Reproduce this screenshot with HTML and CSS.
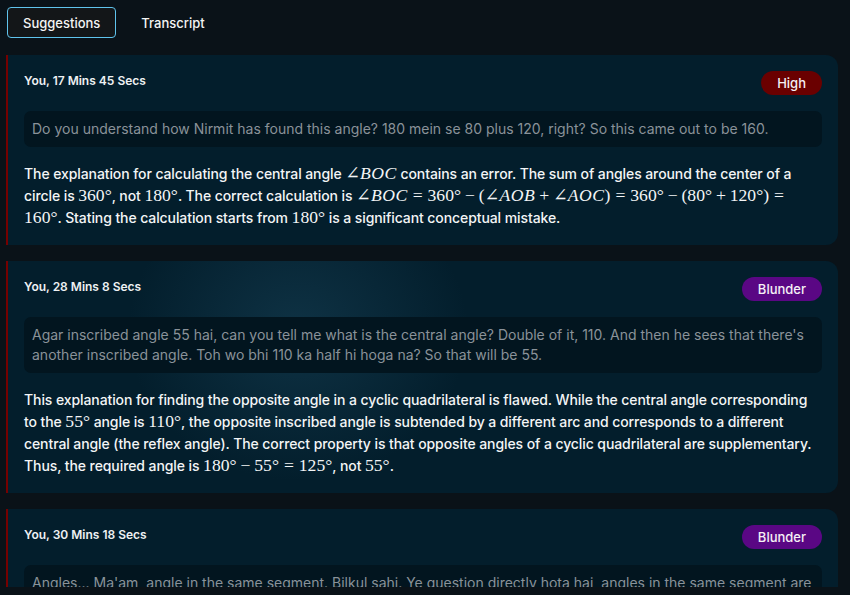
FILE: index.html
```html
<!DOCTYPE html>
<html>
<head>
<meta charset="utf-8">
<link rel="stylesheet" href="styles.css">
</head>
<body>
<div class="app">
  <div class="tabs">
    <button class="tab active">Suggestions</button>
    <button class="tab">Transcript</button>
  </div>
  <div class="list">
    <div class="card">
      <div class="card-head">
        <span class="who">You, 17 Mins 45 Secs</span>
        <span class="badge high">High</span>
      </div>
      <div class="quote">Do you understand how Nirmit has found this angle? 180 mein se 80 plus 120, right? So this came out to be 160.</div>
      <p class="expl">The explanation for calculating the central angle <span class="m">∠<i>BOC</i></span> contains an error. The sum of angles around the center of a circle is <span class="m">360°</span>, not <span class="m">180°</span>. The correct calculation is <span class="m">∠<i>BOC</i><span class="rel">=</span></span><span class="m">360°<span class="bin">−</span></span><span class="m">(∠<i>AOB</i><span class="bin">+</span></span><span class="m">∠<i>AOC</i>)<span class="rel">=</span></span><span class="m">360°<span class="bin">−</span></span><span class="m">(80°<span class="bin">+</span></span><span class="m">120°)<span class="rel">=</span></span> <span class="m">160°</span>. Stating the calculation starts from <span class="m">180°</span> is a significant conceptual mistake.</p>
    </div>

    <div class="card glow">
      <div class="card-head">
        <span class="who">You, 28 Mins 8 Secs</span>
        <span class="badge blunder">Blunder</span>
      </div>
      <div class="quote">Agar inscribed angle 55 hai, can you tell me what is the central angle? Double of it, 110. And then he sees that there's another inscribed angle. Toh wo bhi 110 ka half hi hoga na? So that will be 55.</div>
      <p class="expl">This explanation for finding the opposite angle in a cyclic quadrilateral is flawed. While the central angle corresponding to the <span class="m">55°</span> angle is <span class="m">110°</span>, the opposite inscribed angle is subtended by a different arc and corresponds to a different central angle (the reflex angle). The correct property is that opposite angles of a cyclic quadrilateral are supplementary. Thus, the required angle is <span class="m">180°<span class="bin">−</span></span><span class="m">55°<span class="rel">=</span></span><span class="m">125°</span>, not <span class="m">55°</span>.</p>
    </div>

    <div class="card">
      <div class="card-head">
        <span class="who">You, 30 Mins 18 Secs</span>
        <span class="badge blunder">Blunder</span>
      </div>
      <div class="quote">Angles... Ma'am, angle in the same segment. Bilkul sahi. Ye question directly hota hai, angles in the same segment are equal. So angle ACB and angle ADB are in the same segment, so they will be equal.</div>
      <p class="expl">This explanation is correct and clear.</p>
    </div>
  </div>
</div>
</body>
</html>
```

FILE: styles.css
```css
* { box-sizing: border-box; }
html, body {
  margin: 0;
  padding: 0;
  background: #0a1218;
  font-family: Inter, "Noto Sans", sans-serif;
}
.app {
  width: 850px;
  height: 595px;
  overflow: hidden;
}
.tabs {
  display: flex;
  gap: 9px;
  padding: 7px 0 0 7px;
}
.tab {
  font-family: Inter, sans-serif;
  font-size: 13px;
  font-weight: 500;
  color: #f4f4f4;
  background: transparent;
  border: 1px solid transparent;
  border-radius: 4px;
  height: 31px;
  padding: 0 15px;
  cursor: pointer;
}
.tab.active {
  background: #131618;
  border-color: #5fc3ec;
}
.list {
  margin-top: 17px;
  margin-left: 6px;
  width: 832px;
  height: 532px;
  overflow: hidden;
  display: flex;
  flex-direction: column;
  gap: 16px;
}
.card {
  flex: none;
  background: #031e2c;
  border-left: 2px solid #760000;
  border-radius: 0 12px 12px 0;
  padding: 16px;
}
.card.glow {
  background:
    radial-gradient(ellipse 170px 150px at 290px 70px, rgba(30, 78, 102, 0.42), rgba(3, 30, 44, 0) 100%),
    #031e2c;
}
.card-head {
  display: flex;
  align-items: flex-start;
  justify-content: space-between;
  height: 24px;
}
.who {
  font-size: 12px;
  font-weight: 600;
  line-height: 19px;
  color: #eef1f3;
}
.badge {
  font-size: 13px;
  font-weight: 500;
  color: #f5f0f5;
  height: 24px;
  line-height: 24px;
  padding: 0 16px;
  border-radius: 12px;
}
.badge.high { background: #6a0000; }
.badge.blunder { background: #5a0784; }
.quote {
  margin-top: 16px;
  background: #02151f;
  border-radius: 7px;
  padding: 8px;
  font-size: 14px;
  line-height: 20px;
  color: #8a9299;
}
.expl {
  margin: 16px 0 0;
  font-size: 14px;
  font-weight: 500;
  line-height: 22px;
  letter-spacing: -0.09px;
  color: #f3f5f6;
}
.m {
  font-family: "Liberation Serif", "DejaVu Serif", serif;
  font-weight: 400;
  font-size: 1.26em;
  line-height: 1;
  letter-spacing: 0;
  white-space: nowrap;
}
.m i { font-style: italic; letter-spacing: 0.03em; }
.rel { margin: 0 0.28em; }
.bin { margin: 0 0.22em; }
```
